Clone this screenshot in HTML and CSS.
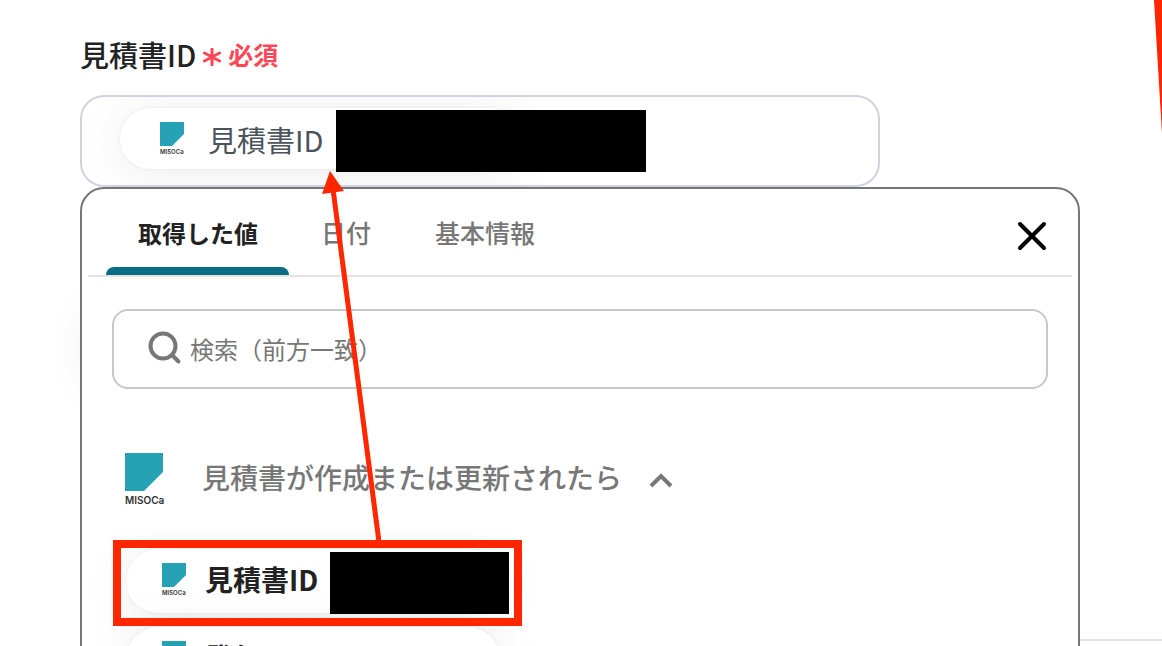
FILE: index.html
```html
<!DOCTYPE html>
<html lang="ja">

<head>
    <title>見積書ID</title>
    <meta charset="UTF-8">
    <meta name="viewport" content="width=device-width, initial-scale=1">
    <link rel="stylesheet" href="styles.css">
</head>

<body>
    <svg width="0" height="0" class="defs" aria-hidden="true">
        <symbol id="mark" viewBox="0 0 38 38">
            <path d="M0 0H38V19L19 38H0Z" fill="#27a2b5" />
        </symbol>
    </svg>

    <div class="main">
        <div class="label">
            <span class="name">見積書ID</span>
            <svg class="star" viewBox="0 0 18 18" aria-hidden="true">
                <path d="M9 1V17M1.5 5L16.5 13M16.5 5L1.5 13" />
            </svg>
            <span class="must">必須</span>
        </div>

        <div class="picker">
            <div class="field">
                <div class="chip">
                    <span class="logo"><svg class="mark"><use href="#mark" /></svg><span class="brand">MISOCa</span></span>
                    <span class="text">見積書ID</span>
                </div>
                <div class="mask"></div>
            </div>

            <div class="panel">
                <div class="tabs">
                    <button class="tab active">取得した値</button>
                    <button class="tab">日付</button>
                    <button class="tab">基本情報</button>
                    <button class="close" aria-label="閉じる">
                        <svg viewBox="0 0 30 30">
                            <path d="M3 3L27 27M27 3L3 27" />
                        </svg>
                    </button>
                </div>

                <label class="search">
                    <svg class="glass" viewBox="0 0 34 34" aria-hidden="true">
                        <circle cx="15" cy="15" r="12.5" />
                        <path d="M24 24L30.5 30.5" />
                    </svg>
                    <input type="text" placeholder="検索（前方一致）" aria-label="検索">
                </label>

                <button class="group">
                    <span class="logo big"><svg class="mark"><use href="#mark" /></svg><span class="brand">MISOCa</span></span>
                    <span class="title">見積書が作成または更新されたら</span>
                    <svg class="arrow" viewBox="0 0 24 16" aria-hidden="true">
                        <path d="M2 13L12 3L22 13" />
                    </svg>
                </button>

                <div class="list">
                    <button class="chip item">
                        <span class="logo"><svg class="mark"><use href="#mark" /></svg><span class="brand">MISOCa</span></span>
                        <span class="text">見積書ID</span>
                        <span class="mask"></span>
                    </button>
                    <button class="chip item">
                        <span class="logo"><svg class="mark"><use href="#mark" /></svg><span class="brand">MISOCa</span></span>
                        <span class="text">発行</span>
                    </button>
                </div>
            </div>
        </div>
    </div>
    <hr class="line">

    <!-- red notes drawn over the screen -->
    <div class="frame"></div>
    <svg class="pointer" width="60" height="374" viewBox="0 0 60 374" aria-hidden="true">
        <path d="M12 18L58 371" />
        <polygon points="9,0 23,20 1,23" />
    </svg>
    <svg class="edge" width="8" height="134" viewBox="0 0 8 134" aria-hidden="true">
        <polygon points="0,0 8,0 8,134" />
    </svg>
</body>

</html>
```

FILE: styles.css
```css
* {
    box-sizing: border-box;
    padding: 0;
    margin: 0;
}

body {
    position: relative;
    height: 100vh;
    overflow: hidden;
    background-color: #fff;
    color: #222;
    font-family: "Noto Sans CJK JP", sans-serif;
}

button {
    border: none;
    background: none;
    font-family: inherit;
    color: inherit;
    white-space: nowrap;
    cursor: pointer;
}

svg {
    display: block;
    flex: none;
}

.defs {
    position: absolute;
}

.main {
    padding: 34px 80px 0;
}

.label {
    display: flex;
    align-items: center;
    height: 40px;
}

.name {
    font-size: 29px;
    font-weight: 500;
}

.star {
    width: 18px;
    height: 18px;
    margin: 6px 7px 0 7px;
    fill: none;
    stroke: #ff4757;
    stroke-width: 3;
    stroke-linecap: round;
}

.must {
    font-size: 25px;
    font-weight: 700;
    color: #ff4757;
}

.picker {
    position: relative;
    margin-top: 21px;
}

.field {
    position: relative;
    max-width: 800px;
    height: 92px;
    padding: 11px 38px;
    border: 2px solid #cdd3df;
    border-radius: 24px;
    overflow: hidden;
}

.chip {
    display: flex;
    align-items: center;
    gap: 24px;
    width: 400px;
    height: 61px;
    padding: 0 40px;
    border-radius: 32px;
    background-color: #fff;
    box-shadow: 0 4px 50px rgba(0, 0, 0, 0.08), 0 0 3px rgba(0, 0, 0, 0.08);
    font-size: 29px;
    color: #4a525b;
}

.logo {
    width: 24px;
}

.mark {
    width: 24px;
    height: 24px;
}

.brand {
    display: block;
    margin-top: 2px;
    font-family: Inter, sans-serif;
    font-size: 6px;
    line-height: 7px;
    font-weight: 600;
    text-align: left;
    color: #333;
}

.mask {
    position: absolute;
    background-color: #000;
}

.field .mask {
    top: 13px;
    left: 254px;
    width: 310px;
    height: 62px;
}

.panel {
    position: absolute;
    top: 92px;
    left: 0;
    width: 100%;
    max-width: 1000px;
    padding: 0 6px;
    border: 2px solid #757678;
    border-radius: 24px;
    background-color: #fff;
}

/* soft shadow at the left side of the panel */
.panel::before {
    content: "";
    position: absolute;
    z-index: -1;
    top: 120px;
    left: 14px;
    width: 100px;
    height: 80px;
    border-radius: 40px;
    box-shadow: 0 0 50px rgba(0, 0, 0, 0.16);
}

.tabs {
    display: flex;
    height: 88px;
    padding-left: 18px;
    border-bottom: 2px solid #e4e4e4;
}

.tab {
    padding: 8px 32px 0;
    border-bottom: 8px solid transparent;
    font-size: 25px;
    font-weight: 500;
    color: #777;
}

.active {
    position: relative;
    width: 183px;
    font-size: 24px;
    font-weight: 700;
    color: #222;
}

.active::after {
    content: "";
    position: absolute;
    bottom: -8px;
    left: 0;
    width: 100%;
    height: 8px;
    border-radius: 8px 8px 0 0;
    background-color: #0a6c85;
}

.close {
    margin: 8px 25px 0 auto;
}

.close svg {
    width: 30px;
    height: 30px;
    fill: none;
    stroke: #000;
    stroke-width: 4;
    stroke-linecap: round;
}

.search {
    display: flex;
    align-items: center;
    gap: 8px;
    height: 80px;
    margin: 32px 24px 0;
    padding: 0 34px 2px;
    border: 2px solid #c8c8c8;
    border-radius: 16px;
}

.glass {
    width: 34px;
    height: 34px;
    fill: none;
    stroke: #777;
    stroke-width: 4;
    stroke-linecap: round;
}

.search input {
    flex: 1;
    min-width: 0;
    border: none;
    outline: none;
    background: none;
    font-family: inherit;
    font-size: 24px;
}

.search input::placeholder {
    color: #777;
}

.group {
    display: flex;
    align-items: center;
    height: 100px;
    margin: 40px 0 0 37px;
    color: #777;
}

.big {
    width: 38px;
    margin-right: 39px;
}

.big .mark {
    width: 38px;
    height: 38px;
}

.big .brand {
    margin-top: 3px;
    font-size: 10px;
    line-height: 12px;
}

.title {
    padding-bottom: 4px;
    font-size: 28px;
    font-weight: 500;
}

.arrow {
    width: 24px;
    height: 16px;
    margin: 4px 0 0 27px;
    fill: none;
    stroke: #777;
    stroke-width: 4;
}

.list {
    padding: 20px 38px;
    overflow: hidden;
}

.item {
    position: relative;
    gap: 19px;
    width: 374px;
    height: 64px;
    padding: 0 0 4px 36px;
    margin-bottom: 14px;
    font-size: 28px;
    font-weight: 700;
    color: #222;
}

.item .mask {
    top: 3px;
    left: 204px;
    width: 179px;
    height: 62px;
}

.line {
    position: absolute;
    z-index: -1;
    top: 639px;
    left: 1080px;
    right: 0;
    border: none;
    border-top: 2px solid #e4e4e4;
}

.frame {
    position: absolute;
    top: 540px;
    left: 113px;
    width: 409px;
    height: 86px;
    border: 8px solid #ff2600;
}

.pointer {
    position: absolute;
    top: 171px;
    left: 321px;
    fill: #ff2600;
}

.pointer path {
    stroke: #ff2600;
    stroke-width: 5;
}

.edge {
    position: absolute;
    top: 0;
    right: 0;
    fill: #ff2600;
}
```
